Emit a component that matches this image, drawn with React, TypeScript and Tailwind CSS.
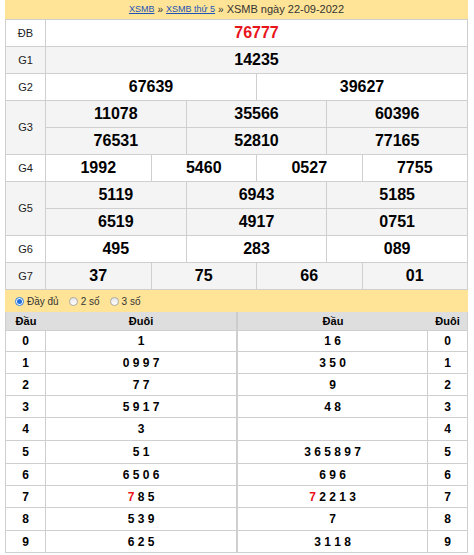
import React from "react";

type Prize = { label: string; rows: string[][]; gray: boolean; red?: boolean };

const prizes: Prize[] = [
  { label: "ĐB", rows: [["76777"]], gray: false, red: true },
  { label: "G1", rows: [["14235"]], gray: true },
  { label: "G2", rows: [["67639", "39627"]], gray: false },
  { label: "G3", rows: [["11078", "35566", "60396"], ["76531", "52810", "77165"]], gray: true },
  { label: "G4", rows: [["1992", "5460", "0527", "7755"]], gray: false },
  { label: "G5", rows: [["5119", "6943", "5185"], ["6519", "4917", "0751"]], gray: true },
  { label: "G6", rows: [["495", "283", "089"]], gray: false },
  { label: "G7", rows: [["37", "75", "66", "01"]], gray: true },
];

const loto: { left: string; right: string; redL?: boolean; redR?: boolean }[] = [
  { left: "1", right: "1 6" },
  { left: "0 9 9 7", right: "3 5 0" },
  { left: "7 7", right: "9" },
  { left: "5 9 1 7", right: "4 8" },
  { left: "3", right: "" },
  { left: "5 1", right: "3 6 5 8 9 7" },
  { left: "6 5 0 6", right: "6 9 6" },
  { left: "7 8 5", right: "7 2 2 1 3", redL: true, redR: true },
  { left: "5 3 9", right: "7" },
  { left: "6 2 5", right: "3 1 1 8" },
];

const rowHeights = ["h-[20px]", "h-[21px]", "h-[21px]", "h-[21px]", "h-[22px]", "h-[22px]", "h-[21px]", "h-[21px]", "h-[22px]", "h-[21px]"];

const gridCols: Record<number, string> = {
  1: "grid-cols-1",
  2: "grid-cols-2",
  3: "grid-cols-3",
  4: "grid-cols-4",
};

function Digits({ text, red }: { text: string; red?: boolean }) {
  if (red && text.length > 0) {
    return (
      <span>
        <span className="text-[#e8141b]">{text[0]}</span>
        {text.slice(1)}
      </span>
    );
  }
  return <span>{text}</span>;
}

function Radio({ checked }: { checked?: boolean }) {
  return checked ? (
    <span className="w-[9px] h-[9px] rounded-full border border-[#2f7ad8] bg-white flex items-center justify-center">
      <span className="w-[5px] h-[5px] rounded-full bg-[#1b6fe0]" />
    </span>
  ) : (
    <span className="w-[9px] h-[9px] rounded-full border border-[#a9a9a9] bg-gradient-to-b from-[#e6e6e6] to-white" />
  );
}

export default function App() {
  return (
    <div className="w-[474px] h-[555px] bg-white overflow-hidden" style={{ fontFamily: '"Liberation Sans", Arial, sans-serif' }}>
      <div className="ml-[5px] w-[463px]">
        {/* Title bar */}
        <div className="h-[19px] bg-[#ffe396] flex items-center justify-center text-[11px] text-[#333]">
          <span className="text-[9px] text-[#2153b5] underline">XSMB</span>
          <span className="mx-[3px] text-[10px]">»</span>
          <span className="text-[9px] text-[#2153b5] underline">XSMB thứ 5</span>
          <span className="mx-[3px] text-[10px]">»</span>
          <span>XSMB ngày 22-09-2022</span>
        </div>

        {/* Prize table */}
        <div className="bg-[#cfcfcf] p-px flex flex-col gap-px">
          {prizes.map((p) => {
            const bg = p.gray ? "bg-[#f4f4f4]" : "bg-white";
            return (
              <div key={p.label} className="flex gap-px">
                <div className={`w-[39px] shrink-0 ${bg} flex items-center justify-center text-[11px] text-[#222]`}>{p.label}</div>
                <div className="flex-1 flex flex-col gap-px">
                  {p.rows.map((r, i) => (
                    <div key={i} className={`grid ${gridCols[r.length]} gap-px`}>
                      {r.map((n, j) => (
                        <div
                          key={j}
                          className={`h-[26px] ${bg} flex items-center justify-center text-[16px] font-bold ${p.red ? "text-[#e8141b]" : "text-black"}`}
                        >
                          {n}
                        </div>
                      ))}
                    </div>
                  ))}
                </div>
              </div>
            );
          })}
        </div>

        {/* Radio bar */}
        <div className="h-[22px] bg-[#ffe396] flex items-center pl-[10px] text-[10px] text-[#333]">
          <label className="flex items-center gap-[3px]">
            <Radio checked />
            <span>Đầy đủ</span>
          </label>
          <label className="flex items-center gap-[3px] ml-[10px]">
            <Radio />
            <span>2 số</span>
          </label>
          <label className="flex items-center gap-[3px] ml-[10px]">
            <Radio />
            <span>3 số</span>
          </label>
        </div>

        {/* Loto table */}
        <div className="bg-[#cfcfcf] px-px pb-px flex flex-col gap-px">
          <div className="flex h-[18px] bg-[#dedede] text-[11px] font-bold text-black">
            <div className="w-[40px] flex items-center justify-center">Đầu</div>
            <div className="w-[190px] flex items-center justify-center">Đuôi</div>
            <div className="w-[2px] bg-[#cccccc]" />
            <div className="w-[190px] flex items-center justify-center">Đầu</div>
            <div className="w-[39px] flex items-center justify-center">Đuôi</div>
          </div>
          {loto.map((r, i) => (
            <div key={i} className={`flex ${rowHeights[i]} text-[12px] font-bold text-black`}>
              <div className="w-[39px] bg-white flex items-center justify-center">{i}</div>
              <div className="w-[1px]" />
              <div className="w-[190px] bg-white flex items-center justify-center">
                <Digits text={r.left} red={r.redL} />
              </div>
              <div className="w-[2px]" />
              <div className="w-[189px] bg-white flex items-center justify-center">
                <Digits text={r.right} red={r.redR} />
              </div>
              <div className="w-[1px]" />
              <div className="w-[39px] bg-white flex items-center justify-center">{i}</div>
            </div>
          ))}
        </div>
      </div>
    </div>
  );
}
